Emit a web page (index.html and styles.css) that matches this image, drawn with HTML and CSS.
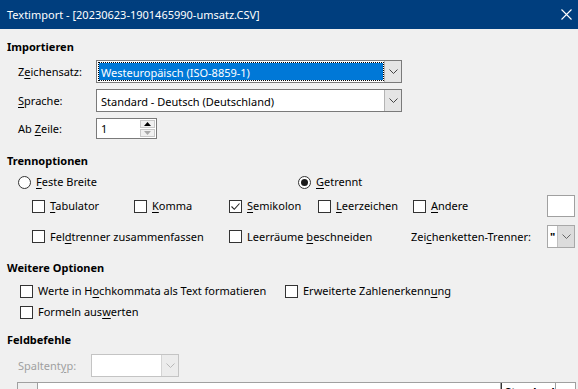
FILE: index.html
```html
<!DOCTYPE html>
<html lang="de">
<head>
<meta charset="utf-8">
<title>Textimport</title>
<link rel="stylesheet" href="styles.css">
</head>
<body>
<div class="window">
  <div class="titlebar">
    <span class="title">Textimport - [20230623-1901465990-umsatz.CSV]</span>
    <svg class="close" width="11" height="11" viewBox="0 0 11 11"><path d="M0.5 0.5 L10.5 10.5 M10.5 0.5 L0.5 10.5" stroke="#fff" stroke-width="1.1" fill="none"/></svg>
  </div>
  <div class="dialog">
    <div class="heading h-import">Importieren</div>
    <div class="import-grid">
      <span class="label">Z<u>e</u>ichensatz:</span>
      <div class="combo">
        <span class="value selected">Westeuropäisch (ISO-8859-1)</span>
        <span class="btn"><svg width="9" height="5" viewBox="0 0 9 5"><path d="M0.5 0.5 L4.5 4.5 L8.5 0.5" stroke="#444" fill="none"/></svg></span>
      </div>
      <span class="label"><u>S</u>prache:</span>
      <div class="combo">
        <span class="value">Standard - Deutsch (Deutschland)</span>
        <span class="btn"><svg width="9" height="5" viewBox="0 0 9 5"><path d="M0.5 0.5 L4.5 4.5 L8.5 0.5" stroke="#444" fill="none"/></svg></span>
      </div>
      <span class="label">Ab <u>Z</u>eile:</span>
      <div class="spin">
        <span class="value">1</span>
        <span class="arrows">
          <span class="arrow up"><svg width="7" height="4" viewBox="0 0 7 4"><path d="M0 4 L3.5 0 L7 4 Z" fill="#000"/></svg></span>
          <span class="arrow down"><svg width="7" height="4" viewBox="0 0 7 4"><path d="M0 0 L3.5 4 L7 0 Z" fill="#a8a8a8"/></svg></span>
        </span>
      </div>
    </div>

    <div class="heading h-trenn">Trennoptionen</div>
    <div class="radio-row">
      <label class="opt"><span class="radio"></span><span><u>F</u>este Breite</span></label>
      <label class="opt"><span class="radio on"></span><span><u>G</u>etrennt</span></label>
    </div>
    <div class="sep-grid">
      <label class="opt"><span class="check"></span><span><u>T</u>abulator</span></label>
      <label class="opt"><span class="check"></span><span><u>K</u>omma</span></label>
      <label class="opt"><span class="check on"><svg width="11" height="11" viewBox="0 0 11 11"><path d="M1.5 5.5 L4.3 8.3 L9.5 2.5" stroke="#222" stroke-width="1.1" fill="none"/></svg></span><span><u>S</u>emikolon</span></label>
      <label class="opt"><span class="check"></span><span><u>L</u>eerzeichen</span></label>
      <label class="opt"><span class="check"></span><span><u>A</u>ndere</span></label>
      <span class="textfield"></span>

      <label class="opt span2"><span class="check"></span><span>Fel<u>d</u>trenner zusammenfassen</span></label>
      <label class="opt span2"><span class="check"></span><span>Leerräume <u>b</u>eschneiden</span></label>
      <span class="quote-label">Zei<u>c</u>henketten-Trenner:</span>
      <div class="combo small">
        <span class="value q">"</span>
        <span class="btn"><svg width="9" height="5" viewBox="0 0 9 5"><path d="M0.5 0.5 L4.5 4.5 L8.5 0.5" stroke="#666" fill="none"/></svg></span>
      </div>
    </div>

    <div class="heading h-weitere">Weitere Optionen</div>
    <div class="more-grid">
      <label class="opt"><span class="check"></span><span>Werte in H<u>o</u>chkommata als Text formatieren</span></label>
      <label class="opt"><span class="check"></span><span>Erweiterte Zahlenerkenn<u>u</u>ng</span></label>
      <label class="opt"><span class="check"></span><span>Formeln aus<u>w</u>erten</span></label>
    </div>

    <div class="heading h-feld">Feldbefehle</div>
    <div class="field-row">
      <span class="label disabled">Spaltent<u>y</u>p:</span>
      <div class="combo disabled-combo">
        <span class="value"></span>
        <span class="btn"><svg width="9" height="5" viewBox="0 0 9 5"><path d="M0.5 0.5 L4.5 4.5 L8.5 0.5" stroke="#b8b8b8" fill="none"/></svg></span>
      </div>
    </div>

    <div class="table">
      <span class="cell c1"></span>
      <span class="cell c2"></span>
      <span class="cell c3">Standard</span>
      <span class="cell c4"></span>
    </div>
  </div>
</div>
</body>
</html>
```

FILE: styles.css
```css
* { box-sizing: border-box; }
html, body { margin: 0; padding: 0; }
body {
  width: 578px;
  height: 389px;
  overflow: hidden;
  background: #f0f0f0;
  font-family: "Noto Sans", "Liberation Sans", sans-serif;
  font-size: 11px;
  color: #000;
}
u { text-decoration: underline; text-underline-offset: 2px; text-decoration-thickness: 1px; }

.titlebar {
  height: 29px;
  background: #003e7e;
  color: #fff;
  display: flex;
  align-items: center;
  justify-content: space-between;
  padding: 0 6px 0 7px;
}
.title { font-size: 11px; line-height: 16px; }
.close { display: block; }

.dialog { padding-left: 7px; }
.heading { font-weight: bold; height: 16px; line-height: 16px; }
.h-import { margin-top: 10px; }
.h-trenn { margin-top: 14px; }
.h-weitere { margin-top: 12px; }
.h-feld { margin-top: 12px; }

.import-grid {
  margin-top: 5px;
  padding-left: 11px;
  display: grid;
  grid-template-columns: 78px 306px;
  grid-template-rows: 23px 23px 21px;
  row-gap: 6px;
  align-items: center;
}
.label { line-height: 16px; }
.disabled { color: #a0a0a0; }

.combo {
  display: flex;
  height: 23px;
  border: 1px solid #7a7a7a;
  background: #fff;
}
.combo .value {
  flex: 1;
  line-height: 19px;
  padding-left: 2px;
  white-space: nowrap;
  overflow: hidden;
  border: 1px solid transparent;
  margin: 1px 0 1px 1px;
}
.combo .value.selected {
  background: #0078d7;
  background-clip: padding-box;
  color: #fff;
  border: 1px dotted #000;
}
.combo .btn {
  width: 17px;
  background: #e5e5e5;
  border-left: 1px solid #b4b4b4;
  display: flex;
  align-items: center;
  justify-content: center;
}
.combo .btn svg { display: block; }

.spin {
  justify-self: start;
  width: 61px;
  height: 21px;
  border: 1px solid #7a7a7a;
  background: #fff;
  display: flex;
}
.spin .value { flex: 1; padding-left: 4px; line-height: 19px; }
.spin .arrows { width: 17px; display: flex; flex-direction: column; padding: 1px; gap: 1px; }
.spin .arrow {
  flex: 1;
  background: #f0f0f0;
  border: 1px solid #c8c8c8;
  display: flex;
  align-items: center;
  justify-content: center;
}
.spin .arrow svg { display: block; }

.opt { display: flex; align-items: center; gap: 5px; white-space: nowrap; line-height: 16px; }
.check {
  width: 13px;
  height: 13px;
  border: 1px solid #333;
  background: #fff;
  flex: none;
  display: flex;
  align-items: center;
  justify-content: center;
}
.check svg { display: block; }
.radio {
  width: 13px;
  height: 13px;
  border: 1px solid #333;
  border-radius: 50%;
  background: #fff;
  flex: none;
  display: flex;
  align-items: center;
  justify-content: center;
}
.radio.on::after {
  content: "";
  width: 7px;
  height: 7px;
  border-radius: 50%;
  background: #1a1a1a;
}

.radio-row {
  margin-top: 5px;
  padding-left: 11px;
  display: grid;
  grid-template-columns: 280px auto;
  height: 16px;
  align-items: center;
}

.sep-grid {
  margin-top: 5px;
  padding-left: 25px;
  display: grid;
  grid-template-columns: 102px 95px 89px 95px 134px 28px;
  grid-template-rows: 22px 23px;
  row-gap: 8px;
  align-items: center;
}
.span2 { grid-column: span 2; }
.quote-label { line-height: 16px; margin-left: -2px; white-space: nowrap; }
.textfield {
  height: 22px;
  border: 1px solid #a0a0a0;
  background: #fff;
}
.combo.small { border-color: #a8a8a8; }
.combo.small .value { padding-left: 2px; color: #000; font-weight: bold; margin: 1px 0; border: 0; }
.combo.small .btn { width: 17px; background: #dcdcdc; border-left: 1px solid #c0c0c0; }

.more-grid {
  margin-top: 7px;
  padding-left: 13px;
  display: grid;
  grid-template-columns: 265px auto;
  grid-template-rows: 16px 16px;
  row-gap: 5px;
  align-items: center;
}

.field-row {
  margin-top: 6px;
  padding-left: 11px;
  display: flex;
  align-items: center;
  height: 23px;
}
.field-row .label { width: 73px; }
.disabled-combo { width: 88px; border-color: #c4c4c4; }
.disabled-combo .btn { background: #ececec; border-left: 1px solid #d4d4d4; }

.table {
  margin-top: 5px;
  margin-left: 10px;
  width: 559px;
  height: 24px;
  display: flex;
  border: 1px solid #a0a0a0;
  background: #fff;
}
.cell { height: 100%; border-right: 1px solid #a0a0a0; }
.c1 { width: 20px; background: #f0f0f0; }
.c2 { width: 463px; }
.c3 { width: 55px; padding-left: 3px; font-weight: bold; line-height: 18px; border-right: 1px solid #a0a0a0; border-left: 1px solid #333; overflow: hidden; white-space: nowrap; }
.c4 { flex: 1; border-right: 0; }
```
